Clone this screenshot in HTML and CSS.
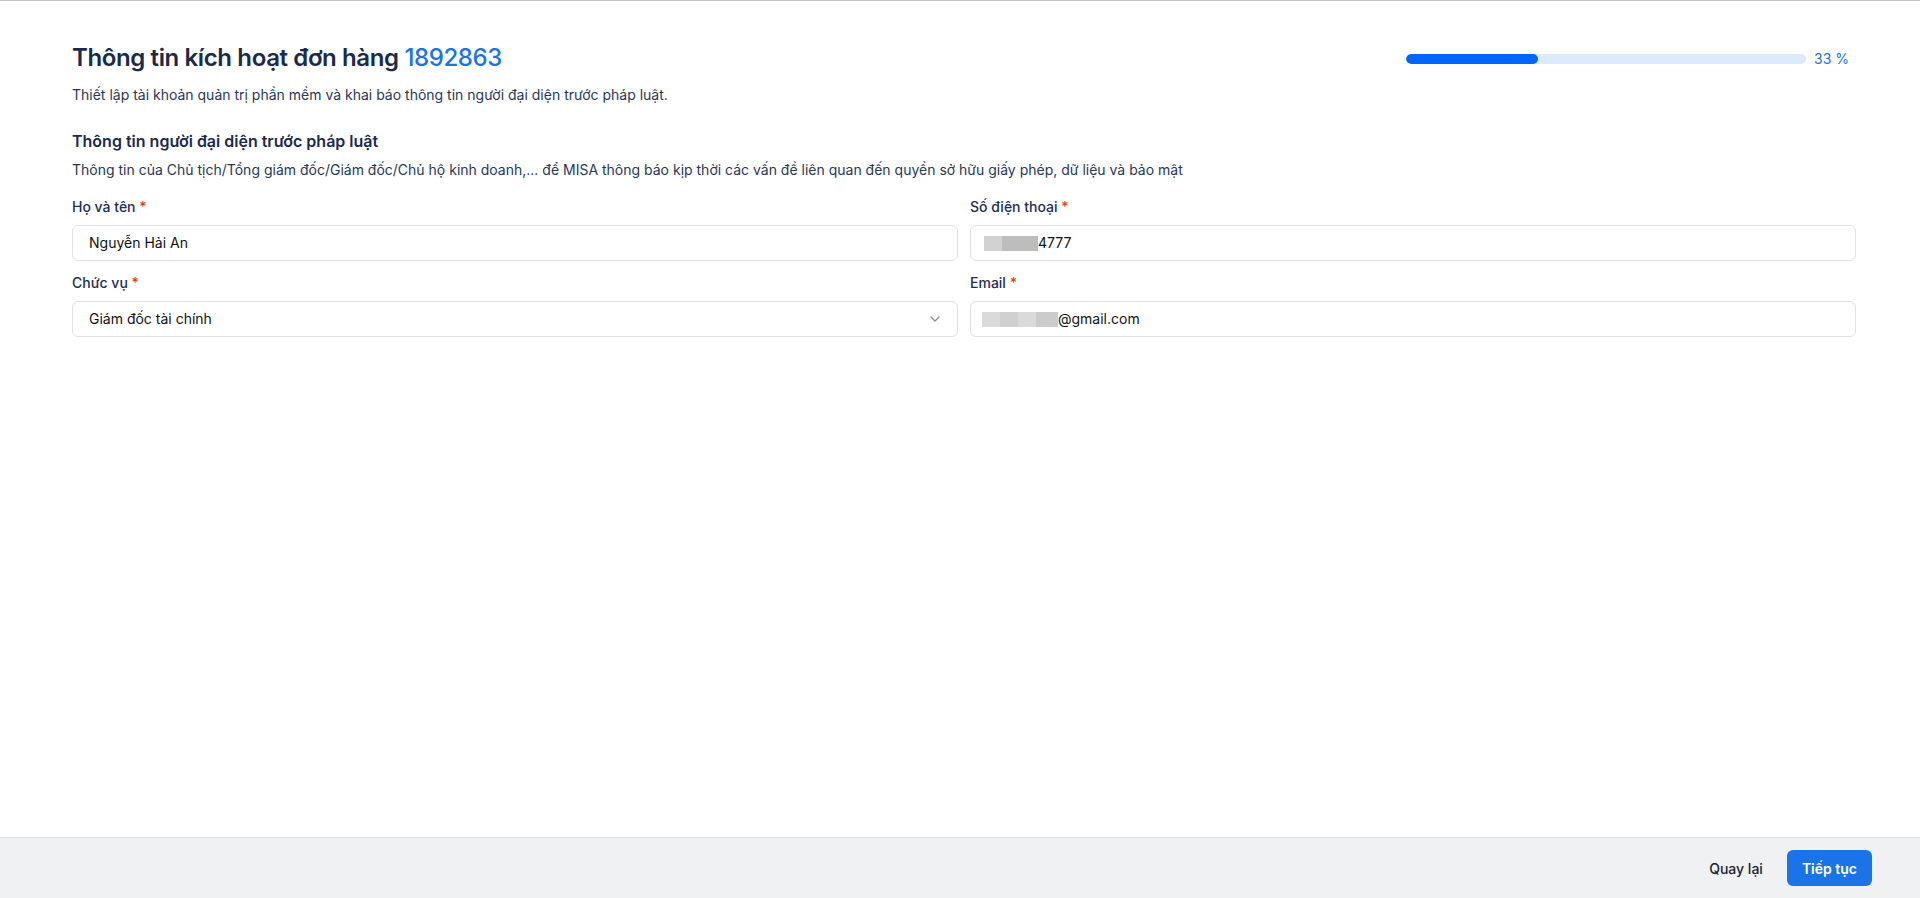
FILE: index.html
```html
<!DOCTYPE html>
<html lang="vi">
<head>
<meta charset="utf-8">
<title>Thông tin kích hoạt đơn hàng</title>
<link rel="stylesheet" href="styles.css">
</head>
<body>
<div class="page">
  <main class="content">
    <div class="header">
      <h1 class="title">Thông tin kích hoạt đơn hàng <span class="order-no">1892863</span></h1>
      <div class="progress">
        <div class="progress-track"><div class="progress-fill" style="width:33%"></div></div>
        <span class="progress-text">33 %</span>
      </div>
    </div>
    <p class="subtitle">Thiết lập tài khoản quản trị phần mềm và khai báo thông tin người đại diện trước pháp luật.</p>

    <h2 class="section-title">Thông tin người đại diện trước pháp luật</h2>
    <p class="section-desc">Thông tin của Chủ tịch/Tổng giám đốc/Giám đốc/Chủ hộ kinh doanh,... để MISA thông báo kịp thời các vấn đề liên quan đến quyền sở hữu giấy phép, dữ liệu và bảo mật</p>

    <div class="form-grid">
      <div class="field">
        <label class="label">Họ và tên <span class="req">*</span></label>
        <div class="input"><span class="value">Nguyễn Hải An</span></div>
      </div>
      <div class="field">
        <label class="label">Số điện thoại <span class="req">*</span></label>
        <div class="input">
          <span class="redact"><span class="rb rb-a"></span><span class="rb rb-b wide"></span></span><span class="value">4777</span>
        </div>
      </div>
      <div class="field">
        <label class="label">Chức vụ <span class="req">*</span></label>
        <div class="input select">
          <span class="value">Giám đốc tài chính</span>
          <svg class="chevron" width="10" height="6" viewBox="0 0 10 6"><path d="M1 1 L5 5 L9 1" fill="none" stroke="#8a8f99" stroke-width="1.2" stroke-linecap="round" stroke-linejoin="round"/></svg>
        </div>
      </div>
      <div class="field">
        <label class="label">Email <span class="req">*</span></label>
        <div class="input">
          <span class="redact email"><span class="rb rb-c"></span><span class="rb rb-d"></span><span class="rb rb-c"></span><span class="rb rb-e"></span></span><span class="value">@gmail.com</span>
        </div>
      </div>
    </div>
  </main>
  <footer class="footer">
    <button class="btn btn-ghost">Quay lại</button>
    <button class="btn btn-primary">Tiếp tục</button>
  </footer>
</div>
</body>
</html>
```

FILE: styles.css
```css
* { box-sizing: border-box; }
html, body { margin: 0; padding: 0; height: 100%; }
body {
  font-family: Inter, "Noto Sans", "Liberation Sans", sans-serif;
  color: #1f2d4d;
  background: #ffffff;
}
.page {
  height: 100vh;
  display: flex;
  flex-direction: column;
  border-top: 1px solid #c4c4c4;
}
.content {
  flex: 1;
  padding: 41px 64px 0 72px;
}
.header {
  display: flex;
  align-items: center;
  justify-content: space-between;
}
.title {
  margin: 0;
  font-size: 24px;
  line-height: 32px;
  font-weight: 600;
  letter-spacing: -0.38px;
  color: #1b2a4a;
}
.order-no { color: #1a73e8; font-weight: 500; }
.progress {
  display: flex;
  align-items: center;
  gap: 8px;
  margin-right: 7px;
  margin-top: 2px;
}
.progress-track {
  width: 400px;
  height: 10px;
  border-radius: 5px;
  background: #dde9fc;
  overflow: hidden;
}
.progress-fill {
  height: 100%;
  border-radius: 5px;
  background: #0066ff;
}
.progress-text {
  font-size: 14px;
  line-height: 20px;
  color: #1a6fe8;
  width: 35px;
}
.subtitle {
  margin: 11px 0 0;
  font-size: 14px;
  line-height: 20px;
  color: #2a3856;
}
.section-title {
  margin: 24px 0 0;
  font-size: 16px;
  line-height: 24px;
  font-weight: 600;
  color: #1b2a4a;
}
.section-desc {
  margin: 7px 0 0;
  font-size: 14px;
  line-height: 20px;
  color: #2a3856;
}
.form-grid {
  margin-top: 17px;
  display: grid;
  grid-template-columns: 886px 886px;
  column-gap: 12px;
  row-gap: 12px;
}
.field { display: flex; flex-direction: column; gap: 8px; }
.label {
  font-size: 14px;
  line-height: 20px;
  font-weight: 500;
  color: #1f2d50;
}
.req { color: #e5391f; }
.input {
  height: 36px;
  border: 1px solid #dfe1e5;
  border-radius: 6px;
  padding: 0 16px;
  display: flex;
  align-items: center;
  font-size: 14px;
  color: #111111;
}
.input.select { justify-content: space-between; padding-right: 17px; }
.value { line-height: 20px; }
.redact { display: flex; height: 15px; margin-left: -3px; }
.redact.email { margin-left: -5px; }
.rb { display: block; height: 15px; width: 18px; }
.rb.wide { width: 36px; }
.rb-a { background: #d2d2d2; }
.rb-b { background: #bdbdbd; }
.rb-c { background: #dadada; }
.rb-d { background: #d0d0d0; }
.rb-e { background: #cbcbcb; width: 22px; }
.chevron { display: block; }
.footer {
  height: 61px;
  flex: none;
  border-top: 1px solid #dcdee2;
  background: #f0f1f3;
  display: flex;
  align-items: center;
  justify-content: flex-end;
  gap: 8px;
  padding: 0 48px 0 0;
}
.btn {
  height: 36px;
  border: none;
  border-radius: 6px;
  padding: 0 16px;
  font-family: Inter, "Noto Sans", "Liberation Sans", sans-serif;
  font-size: 14px;
  cursor: pointer;
}
.btn-ghost { background: transparent; color: #1b2333; font-weight: 500; }
.btn-primary { background: #1a73e8; color: #ffffff; font-weight: 600; padding: 0 15px; }
```
